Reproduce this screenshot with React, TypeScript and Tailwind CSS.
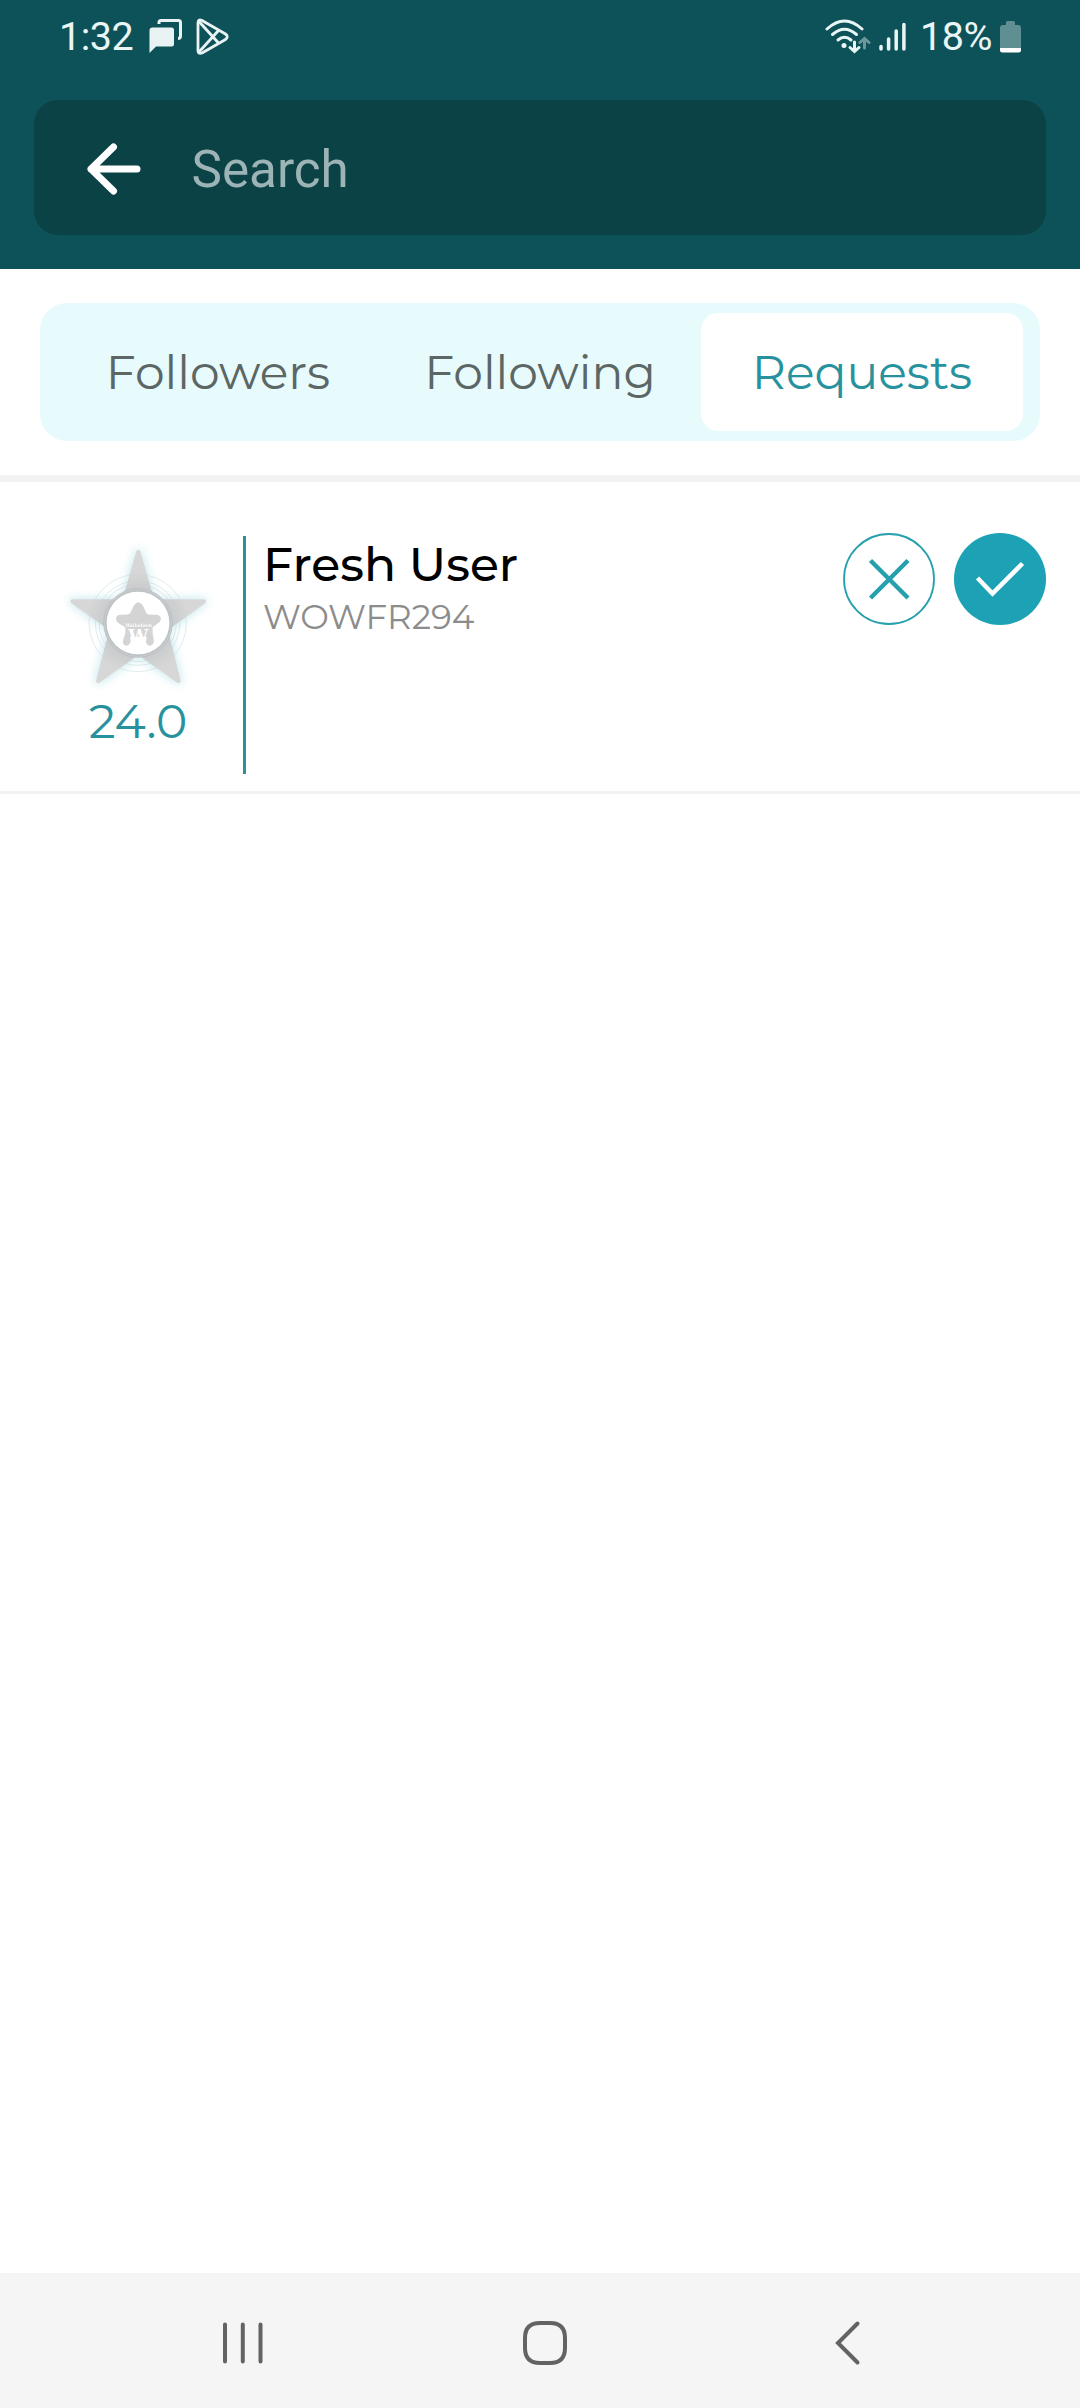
import React from "react";

const montserrat = "font-['Montserrat','Inter',sans-serif]";

function ChatIcon() {
  return (
    <svg className="h-[36px] w-[34px] shrink-0" viewBox="0 0 34 36" fill="none">
      <path d="M10 5V3.500Q10 1.500 12 1.500H29.500Q31.500 1.500 31.500 3.500V17Q31.500 19.500 29 19.500" stroke="#eaf3f3" strokeWidth="3" />
      <path d="M3.500 8.500H22.500Q25 8.500 25 11V25Q25 27.500 22.500 27.500H7L0.500 34V11.500Q0.500 8.500 3.500 8.500Z" fill="#eaf3f3" />
    </svg>
  );
}

function PlayIcon() {
  return (
    <svg className="h-[38px] w-[34px] shrink-0" viewBox="0 0 34 38" fill="none" stroke="#eaf3f3" strokeWidth="2.800" strokeLinejoin="round">
      <path d="M2 5Q2 0.500 6 2.500L29.500 16Q33 18.500 29.500 21.500L6 35Q2 36.500 2 32.500Z" />
      <path d="M3 3.500L22.500 25M3 34L22.500 12.500" />
    </svg>
  );
}

function WifiIcon() {
  return (
    <svg className="h-[36px] w-[46px] shrink-0" viewBox="0 0 46 36" fill="none" strokeWidth="3" strokeLinecap="round">
      <g stroke="#eaf6f6">
        <path d="M2 11Q19.500 -5 37 11" />
        <path d="M7.500 16.500Q19.500 6 31.500 16.500" />
        <path d="M13 22Q19.500 16.500 26 22" />
        <path d="M29.500 24V33M25 29.500L29.500 33.500L34 29.500" />
      </g>
      <circle cx="19" cy="27.500" r="2.500" fill="#eaf6f6" />
      <path d="M39.500 30V20.500M35 24.500L39.500 20.500L44 24.500" stroke="#6f979b" />
    </svg>
  );
}

function SignalIcon() {
  return (
    <svg className="h-[30px] w-[27px] shrink-0" viewBox="0 0 27 30" stroke="#eaf6f6" strokeWidth="3.500" strokeLinecap="round">
      <path d="M2 24.500V27M9.600 17V27M17.200 9V27M24.900 2.500V27" />
    </svg>
  );
}

function BatteryIcon() {
  return (
    <svg className="h-[32px] w-[21px] shrink-0" viewBox="0 0 21 32">
      <path d="M6 4V1.500Q6 0 7.500 0H13.500Q15 0 15 1.500V4H18Q21 4 21 7V27H0V7Q0 4 3 4Z" fill="#5f8e93" />
      <path d="M0 27H21V29Q21 31.500 18.500 31.500H2.500Q0 31.500 0 29Z" fill="#fff" />
    </svg>
  );
}

function StatusBar() {
  return (
    <div className="flex h-[100px] items-start pl-[59px] pr-[59px] font-['Roboto',sans-serif] text-[39.500px] text-[#eaf6f6]">
      <span className="mt-[14px] w-[90px] leading-[46px] tracking-[-0.5px]">1:32</span>
      <div className="mt-[19px]"><ChatIcon /></div>
      <div className="ml-[13px] mt-[18px]"><PlayIcon /></div>
      <div className="ml-auto mt-[18px]"><WifiIcon /></div>
      <div className="ml-[8px] mt-[22px]"><SignalIcon /></div>
      <span className="ml-[14px] mt-[14px] w-[80px] whitespace-nowrap leading-[46px] tracking-[-0.4px]">18%</span>
      <div className="mt-[21px]"><BatteryIcon /></div>
    </div>
  );
}

function SearchBar() {
  return (
    <div className="mx-[34px] flex h-[135px] items-center rounded-[24px] bg-[#0b4246]">
      <svg className="ml-[51px] mt-[3px] h-[56px] w-[58px]" viewBox="0 0 58 56" fill="none" stroke="#fff" strokeWidth="7" strokeLinecap="round" strokeLinejoin="round">
        <path d="M52 28H6M28.500 6L6 28L28.500 50" />
      </svg>
      <span className="ml-[48.500px] mt-[5px] font-['Roboto',sans-serif] text-[51.200px] leading-[60px] text-[#9db4b6]">Search</span>
    </div>
  );
}

function Tabs() {
  return (
    <div className={`mx-[40px] mt-[34px] grid h-[138px] grid-cols-3 rounded-[27px] bg-[#e7fafc] px-[17px] py-[10px] text-[47.250px] text-[#5b6665] ${montserrat}`}>
      <div className="flex items-center justify-center pt-px">Followers</div>
      <div className="flex items-center justify-center pt-px">Following</div>
      <div className="flex items-center justify-center rounded-[17px] bg-white pt-px text-[#27929d]">Requests</div>
    </div>
  );
}

function StarBadge() {
  const star =
    "M289 94Q295 84 301 94L342 238H492Q502 241 496 249L384 330L422 482Q421 492 412 488L295 405L178 488Q168 492 168 482L208 330L93 249Q87 241 97 238H248Z";
  return (
    <svg className="h-[160px] w-[160px]" viewBox="54 60 480 480">
      <defs>
        <filter id="glow" x="-30%" y="-30%" width="160%" height="160%">
          <feGaussianBlur stdDeviation="14" />
        </filter>
        <radialGradient id="shade" gradientUnits="userSpaceOnUse" cx="294" cy="309" r="155">
          <stop offset="0.650" stopColor="#c9cbcc" />
          <stop offset="1" stopColor="#d7d7d7" />
        </radialGradient>
      </defs>
      <path d={star} fill="#c9e9ee" stroke="#c9e9ee" strokeWidth="7" filter="url(#glow)" />
      <g fill="none" stroke="#c3d6da" strokeWidth="1.500">
        <circle cx="293" cy="309" r="146" />
        <circle cx="293" cy="309" r="127" />
        <circle cx="293" cy="309" r="116" />
      </g>
      <path d={star} fill="url(#shade)" />
      <circle cx="294" cy="309" r="103" fill="#c9ced1" stroke="#b3b8bb" strokeWidth="2" />
      <circle cx="294" cy="309" r="97" fill="none" stroke="#b9bdc0" strokeWidth="3" />
      <circle cx="294" cy="309" r="94" fill="#fff" />
      <path
        d="M281 257Q295 236 309 257L320 281Q324 284 334 284H352Q363 287 363 298Q361 306 351 312L338 322V342L342 362Q341 376 329 377Q319 376 318 364L320 350H270L272 364Q270 376 259 377Q248 376 249 362L256 340V322L238 311Q227 304 228 294Q230 285 241 284H257Q267 284 271 279Z"
        fill="#d4d4d4"
      />
      <text x="296" y="320" textAnchor="middle" textLength="79" lengthAdjust="spacingAndGlyphs" fontSize="14" fontWeight="700" fontFamily="DejaVu Serif, serif" fill="#fff" opacity="0.9">Walkofweb</text>
      <text x="295" y="369" textAnchor="middle" textLength="60" lengthAdjust="spacingAndGlyphs" fontSize="54" fontWeight="700" fontFamily="DejaVu Serif, serif" fill="#fff">W</text>
    </svg>
  );
}

function RequestRow() {
  return (
    <div className={`flex h-[312px] items-start border-b-[3px] border-[#f2f2f2] pr-[34px] ${montserrat}`}>
      <div className="flex w-[243px] flex-col items-center pt-[58px]">
        <div className="ml-[33px]"><StarBadge /></div>
        <div className="ml-[33px] mt-[-9px] text-[47.250px] leading-[60px] text-[#27929d]">24.0</div>
      </div>
      <div className="mt-[54px] h-[238px] w-[3px] bg-[#2b929c]" />
      <div className="ml-[17px] mt-[53px] flex flex-col">
        <span className="text-[47.250px] font-medium leading-[59px] text-black">Fresh User</span>
        <span className="text-[34.125px] leading-[46px] text-[#8c8c8c]">WOWFR294</span>
      </div>
      <div className="ml-auto mt-[51px] flex gap-[19px]">
        <svg className="size-[92px]" viewBox="0 0 92 92" fill="none" stroke="#27a0ae">
          <circle cx="46" cy="46" r="45" strokeWidth="1.800" />
          <path d="M27.500 27.500L65 65M65 27.500L27.500 65" strokeWidth="4.500" />
        </svg>
        <svg className="size-[92px]" viewBox="0 0 92 92" fill="none">
          <circle cx="46" cy="46" r="46" fill="#1ca2b4" />
          <path d="M23.500 45L38.500 60.500L68.500 30.500" stroke="#fff" strokeWidth="4.500" />
        </svg>
      </div>
    </div>
  );
}

function NavBar() {
  return (
    <div className="flex h-[135px] items-center bg-[#f5f5f5] pl-[219px] pr-[213px] pt-[5px]">
      <svg className="size-[48px] shrink-0" viewBox="0 0 48 48" stroke="#636363" strokeWidth="4" strokeLinecap="round">
        <path d="M6 5.500V42.500M23.800 5.500V42.500M41.500 5.500V42.500" />
      </svg>
      <svg className="ml-[254px] size-[48px] shrink-0" viewBox="0 0 48 48" fill="none" stroke="#636363" strokeWidth="4">
        <path d="M19 4H29C39 4 44 9 44 19V29C44 39 39 44 29 44H19C9 44 4 39 4 29V19C4 9 9 4 19 4Z" />
      </svg>
      <svg className="ml-auto h-[48px] w-[36px] shrink-0" viewBox="0 0 36 48" fill="none" stroke="#636363" strokeWidth="4" strokeLinecap="round">
        <path d="M26.500 4.500L7 24L26.500 43.500" />
      </svg>
    </div>
  );
}

export default function App() {
  return (
    <div className="flex h-[2408px] w-[1080px] flex-col bg-white">
      <header className="h-[269px] bg-[#0e5259]">
        <StatusBar />
        <SearchBar />
      </header>
      <Tabs />
      <div className="mt-[34px] h-[7px] bg-[#f2f2f2]" />
      <RequestRow />
      <main className="flex-1" />
      <NavBar />
    </div>
  );
}
